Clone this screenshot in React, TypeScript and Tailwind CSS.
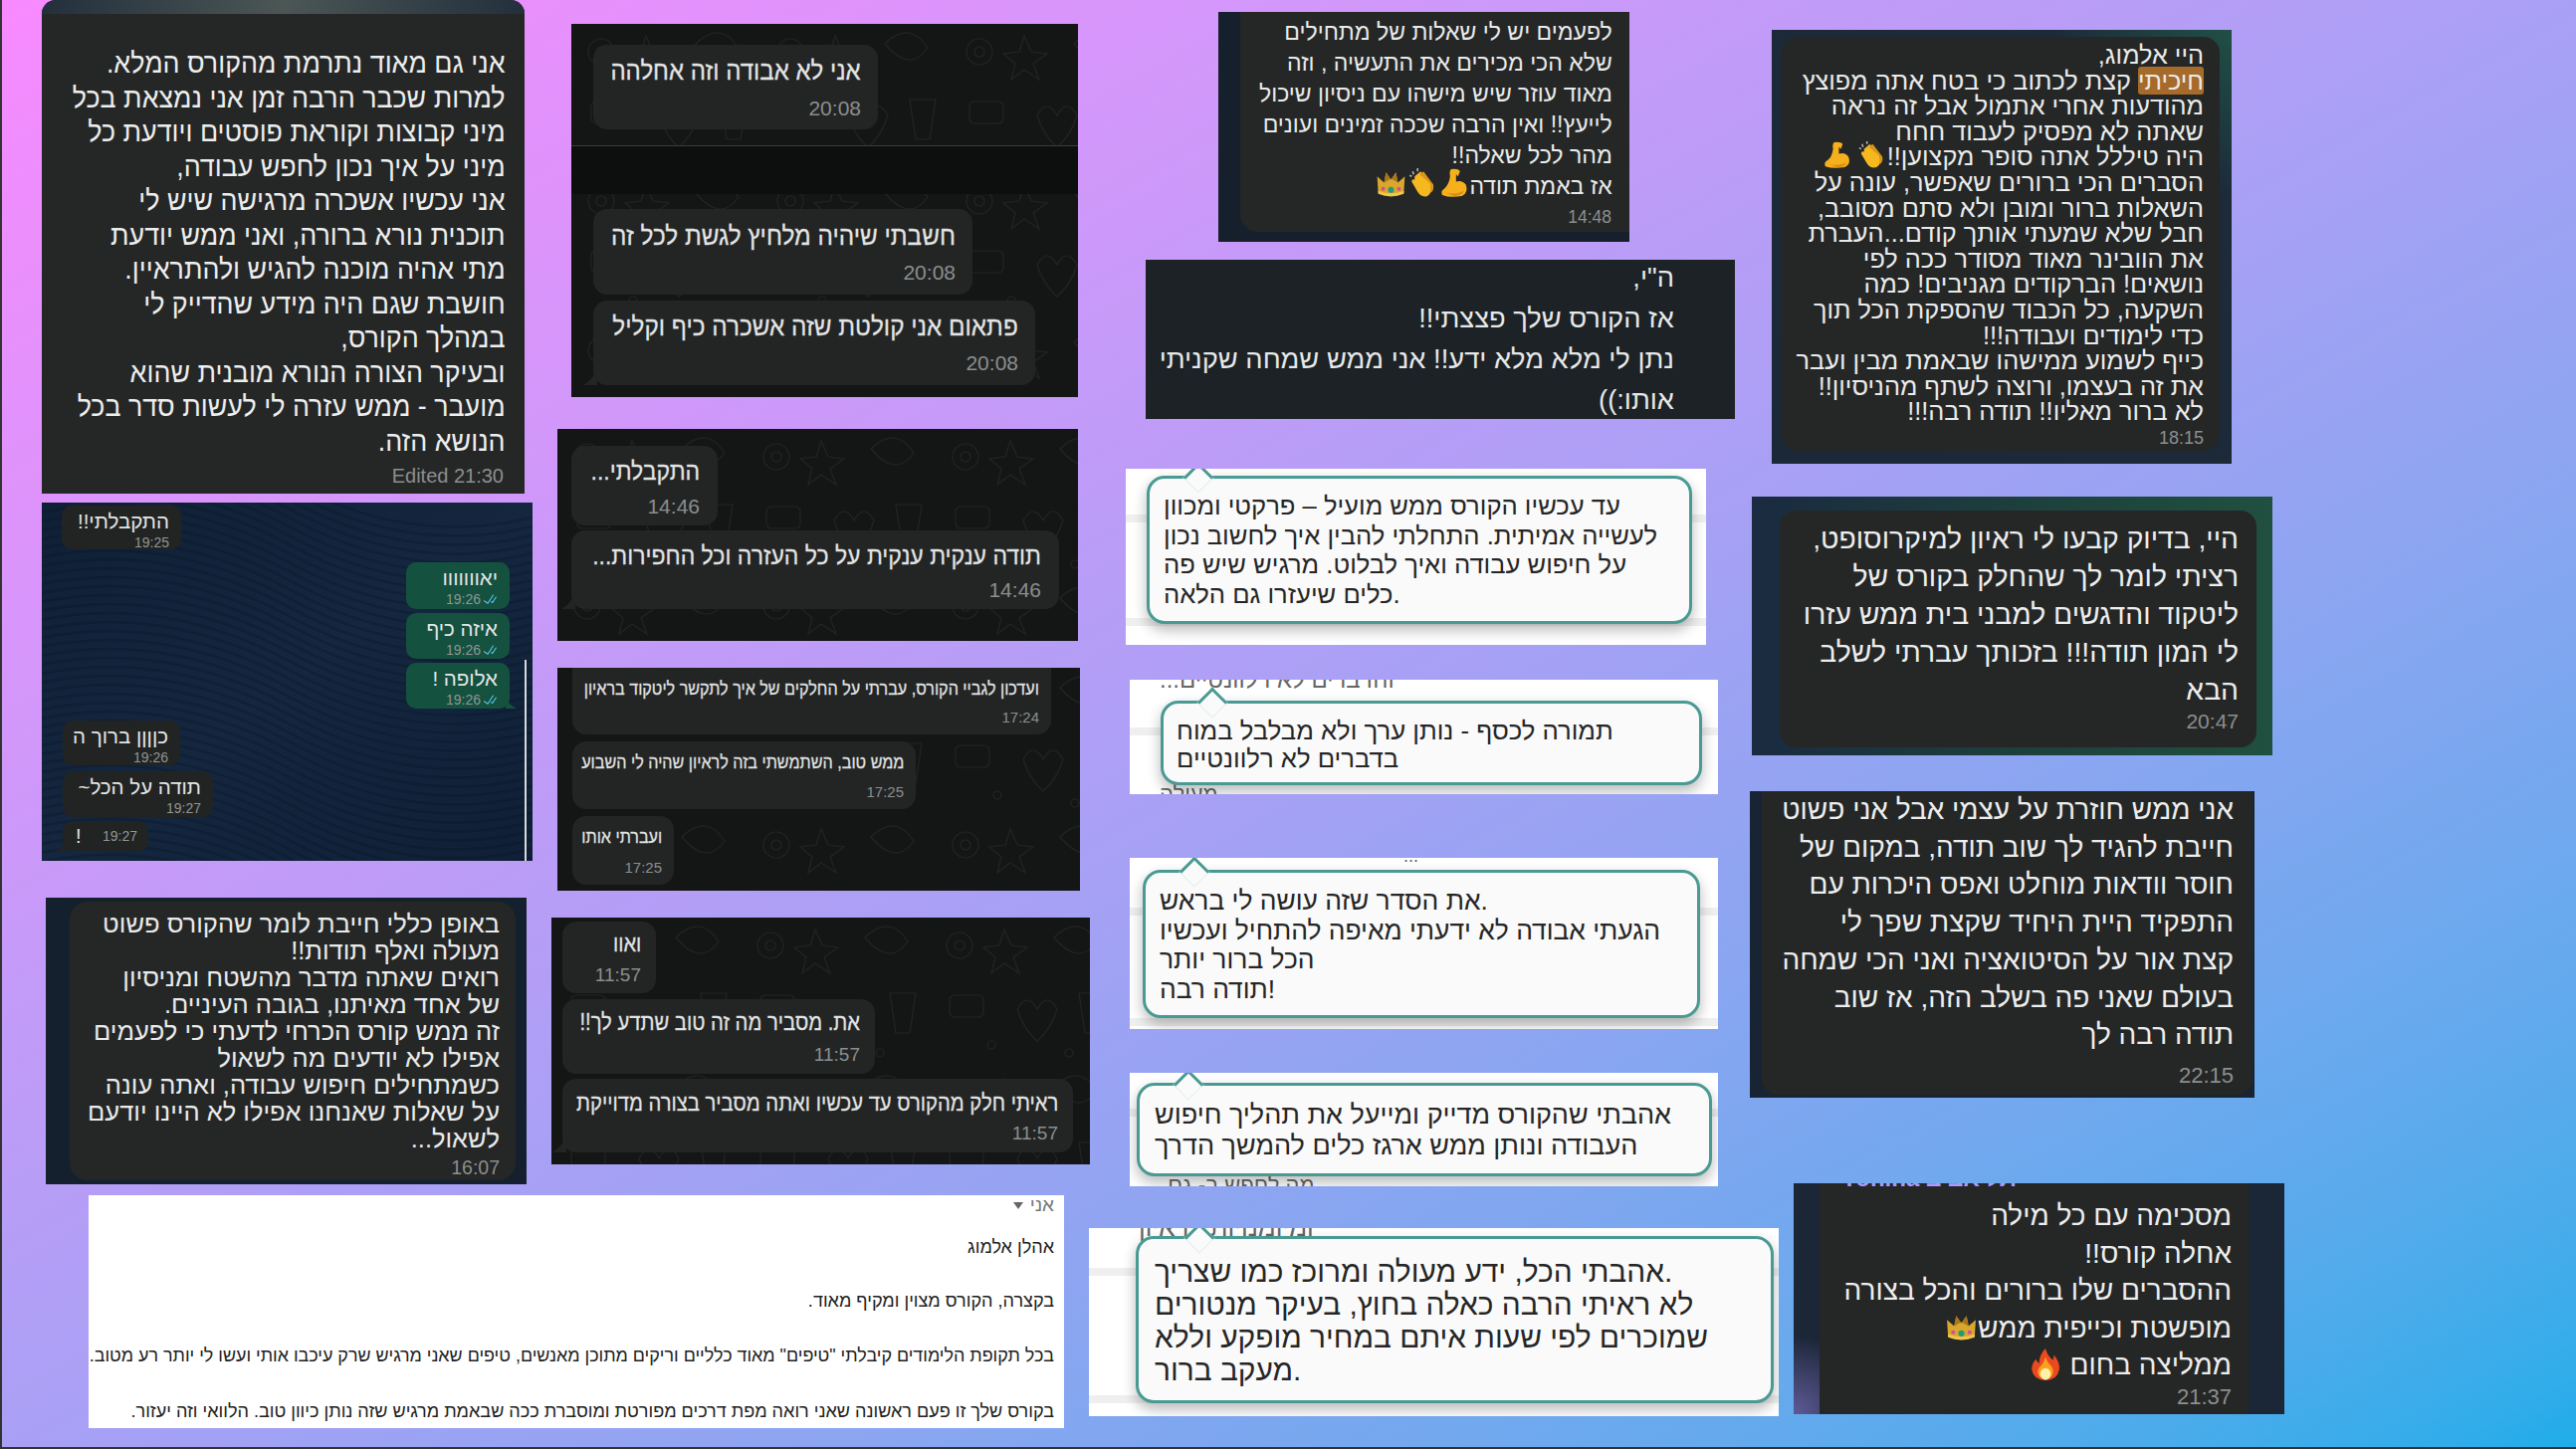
import React from 'react';
import { CheckCheck } from 'lucide-react';

const Crown = ({ s = 26 }: { s?: number }) => (
  <svg width={s} height={s} viewBox="0 0 32 32" className="inline-block align-[3px] -my-[8px]">
    <path d="M3 26 L2 10 L9 16 L11 6 L16 13 L21 6 L23 16 L30 10 L29 26 Q16 31 3 26Z" fill="#d9a72c" />
    <path d="M9 16 L11 6 L16 13 L21 6 L23 16 L16 12Z" fill="#a9761c" />
    <path d="M3 24 Q16 29 29 24 L29 27 Q16 32 3 27Z" fill="#f0c84a" />
    <circle cx="16" cy="23" r="3" fill="#1f9a7c" />
    <circle cx="8" cy="22" r="2" fill="#d64aa0" />
    <circle cx="24" cy="22" r="2" fill="#d64aa0" />
  </svg>
);

const Clap = ({ s = 26 }: { s?: number }) => (
  <svg width={s} height={s} viewBox="0 0 32 32" className="inline-block align-[3px] -my-[8px]">
    <path d="M8 10 L14 5 L24 17 Q27 25 21 29 Q15 31 11 25 L5 15 Q5 12 8 13Z" fill="#f5b81f" />
    <path d="M13 8 L17 5 L27 18 Q28 24 24 26 L24 17Z" fill="#d9961a" />
    <path d="M6 5 L7 8 M11 2 L11 5 M3 9 L5 10" stroke="#bdbdbd" strokeWidth="1.5" />
  </svg>
);

const Muscle = ({ s = 26 }: { s?: number }) => (
  <svg width={s} height={s} viewBox="0 0 32 32" className="inline-block align-[3px] -my-[8px]">
    <path d="M13 3 Q20 2 22 5 L20 10 L18 8 L18 15 Q24 13 28 18 Q31 26 24 29 Q12 31 4 28 Q2 24 6 22 Q11 18 12 10 Q11 5 13 3Z" fill="#f5b01c" />
    <path d="M8 26 Q18 28 26 24 Q24 29 16 29Z" fill="#d68d12" />
  </svg>
);

const Fire = ({ s = 32 }: { s?: number }) => (
  <svg width={s} height={s} viewBox="0 0 32 32" className="inline-block align-[1px] -my-[8px]">
    <path d="M16 1 Q18 8 23 12 Q24 9 24 7 Q30 14 29 21 Q27 31 16 31 Q5 31 3 21 Q3 15 7 11 Q8 14 10 15 Q10 7 16 1Z" fill="#ea4a1f" />
    <path d="M16 9 Q18 15 22 18 Q25 24 21 28 Q16 31 11 28 Q7 24 10 19 Q14 16 16 9Z" fill="#f9a01e" />
    <ellipse cx="16" cy="25" rx="5" ry="5.5" fill="#fff1a8" />
  </svg>
);

const Doodles = () => (
  <svg className="absolute inset-0 w-full h-full">
    <defs>
      <pattern id="doodle" width="190" height="150" patternUnits="userSpaceOnUse">
        <g fill="none" stroke="#212323" strokeWidth="1.2">
          <circle cx="30" cy="28" r="13" />
          <circle cx="30" cy="28" r="5" />
          <path d="M75 12 L82 28 L98 30 L84 40 L90 56 L75 46 L62 56 L66 40 L54 30 L70 28Z" />
          <path d="M125 20 Q150 -4 168 24 Q150 50 125 20Z" />
          <rect x="20" y="78" width="34" height="22" rx="5" />
          <path d="M88 92 Q98 74 108 92 Q118 74 128 92 Q122 112 108 124 Q94 112 88 92Z" />
          <path d="M150 76 L176 76 L170 116 L156 116Z" />
          <circle cx="62" cy="128" r="4" />
          <circle cx="140" cy="136" r="4" />
        </g>
      </pattern>
    </defs>
    <rect width="100%" height="100%" fill="url(#doodle)" />
  </svg>
);

const Waves = () => (
  <svg className="absolute inset-0 w-full h-full" preserveAspectRatio="none" viewBox="0 0 493 360">
    {Array.from({ length: 52 }).map((_, i) => (
      <path
        key={i}
        d={`M-10 ${i * 9 - 60} Q 120 ${i * 9 - 90} 250 ${i * 9 - 20} T 510 ${i * 9 + 10}`}
        fill="none"
        stroke="#0a1524"
        strokeWidth="2.5"
        opacity="0.3"
      />
    ))}
  </svg>
);

const Lines = ({ lines, className = '' }: { lines: React.ReactNode[]; className?: string }) => (
  <div dir="rtl" className={`text-right ${className}`}>
    {lines.map((l, i) => (
      <div key={i} className="whitespace-nowrap">{l}</div>
    ))}
  </div>
);

interface BubbleProps {
  text: string;
  time: string;
  className: string;
  textClass: string;
  timeClass: string;
  tail?: boolean;
}

const Bubble = ({ text, time, className, textClass, timeClass, tail }: BubbleProps) => (
  <div className={`relative bg-[#232525] rounded-[14px] flex flex-col items-end ${className}`}>
    <div dir="rtl" className={`whitespace-nowrap text-[#e4e5e5] origin-right [-webkit-text-stroke:0.3px_#d8d9d9] ${textClass}`}>{text}</div>
    <div className={`text-[#8b8e8e] ${timeClass}`}>{time}</div>
    {tail && (
      <svg width="14" height="16" viewBox="0 0 14 16" className="absolute -left-[10px] bottom-0">
        <path d="M14 0 L14 16 L0 16 Q9 11 14 0Z" fill="#232525" />
      </svg>
    )}
  </div>
);

const PhotoBubble = ({ text, time, className, green, tail }: { text: string; time: string; className: string; green?: boolean; tail?: 'l' | 'r' }) => (
  <div className={`relative rounded-[10px] flex flex-col items-end px-[12px] pt-[4px] ${green ? 'bg-[#14513f]' : 'bg-[#222423]'} ${className}`}>
    <div dir="rtl" className="whitespace-nowrap text-[20.5px] leading-[24px] text-[#e3e5e5]">{text}</div>
    <div className="flex items-center gap-[2px] text-[14px] leading-[18px] text-[#8f9695]">
      {time}
      {green && <CheckCheck size={15} strokeWidth={1.75} className="text-[#5cc6ea] -rotate-12" />}
    </div>
    {tail === 'r' && (
      <svg width="12" height="12" viewBox="0 0 12 12" className="absolute -right-[8px] bottom-0">
        <path d="M0 0 Q4 10 12 12 L0 12Z" fill="#14513f" />
      </svg>
    )}
    {tail === 'l' && (
      <svg width="12" height="12" viewBox="0 0 12 12" className="absolute -left-[8px] bottom-0">
        <path d="M12 0 Q8 10 0 12 L12 12Z" fill="#222423" />
      </svg>
    )}
  </div>
);

const Notch = ({ className }: { className: string }) => (
  <div className={`absolute w-[22px] h-[22px] rotate-45 bg-[#fafafa] border-t-[3px] border-l-[3px] border-t-[#4a9a94] border-l-[#4a9a94] border-r border-b border-r-[#e2eeeb] border-b-[#e2eeeb] ${className}`} />
);

const Band = ({ className }: { className: string }) => (
  <div className={`absolute left-0 right-0 h-[8px] bg-[#efefef] ${className}`} />
);

const Tip = ({ className, children }: { className: string; children: React.ReactNode }) => (
  <div className={`relative bg-[#fafafa] border-[3px] border-[#4a9a94] rounded-[18px] shadow-[0_6px_14px_rgba(0,0,0,0.28)] text-[#262626] ${className}`}>
    {children}
  </div>
);

const TipLines = ({ lines, className }: { lines: string[]; className: string }) => (
  <div className={`text-left ${className}`}>
    {lines.map((l, i) => (
      <div key={i} className="whitespace-nowrap">{l}</div>
    ))}
  </div>
);

export default function App() {
  return (
    <div className="relative w-[2588px] h-[1456px] overflow-hidden bg-linear-to-br from-[#f88aff] via-[#a9a0f5] to-[#1dade9] font-['Liberation_Sans',Arial,sans-serif] shadow-[inset_2px_0_0_#333,inset_0_-2px_0_#333]">
      {/* card A */}
      <div className="absolute left-[42px] top-0 w-[485px] h-[496px] bg-[#252727] rounded-t-[14px] overflow-hidden">
        <div className="h-[14px] bg-linear-to-r from-[#23303c] via-[#4c5655] to-[#23303c]" />
        <Lines
          className="pt-[32px] pr-[21px] text-[29px] leading-[34.5px] text-[#eceded] origin-right scale-x-[0.925]"
          lines={[
            'אני גם מאוד נתרמת מהקורס המלא.',
            'למרות שכבר הרבה זמן אני נמצאת בכל',
            'מיני קבוצות וקוראת פוסטים ויודעת כל',
            'מיני על איך נכון לחפש עבודה,',
            'אני עכשיו אשכרה מרגישה שיש לי',
            'תוכנית נורא ברורה, ואני ממש יודעת',
            'מתי אהיה מוכנה להגיש ולהתראיין.',
            'חושבת שגם היה מידע שהדייק לי',
            'במהלך הקורס,',
            'ובעיקר הצורה הנורא מובנית שהוא',
            'מועבר - ממש עזרה לי לעשות סדר בכל',
            'הנושא הזה.',
          ]}
        />
        <div className="pr-[21px] mt-[7px] text-right text-[20px] leading-[22px] text-[#8b8e8e]">Edited 21:30</div>
      </div>

      {/* card B */}
      <div className="absolute left-[574px] top-[24px] w-[509px] h-[375px] bg-[#141515] overflow-hidden">
        <Doodles />
        <div className="absolute left-0 right-0 top-[122px] h-[49px] bg-[#0d0e0e] border-t border-[#3c3e3e]" />
        <div className="relative pl-[22px] flex flex-col items-start">
          <Bubble className="w-[286px] h-[85px] mt-[21px] px-[17px] pt-[12px]" text="אני לא אבודה וזה אחלהה" time="20:08" textClass="text-[26px] leading-[28px] scale-x-[0.925]" timeClass="text-[21px] leading-[20px] mt-[14px]" />
          <Bubble className="w-[381px] h-[86px] mt-[80px] px-[17px] pt-[13px]" text="חשבתי שיהיה מלחיץ לגשת לכל זה" time="20:08" textClass="text-[26px] leading-[28px] scale-x-[0.935]" timeClass="text-[21px] leading-[20px] mt-[13px]" />
          <Bubble tail className="w-[444px] h-[85px] mt-[6px] px-[17px] pt-[12px]" text="פתאום אני קולטת שזה אשכרה כיף וקליל" time="20:08" textClass="text-[26px] leading-[28px] scale-x-[0.935]" timeClass="text-[21px] leading-[20px] mt-[13px]" />
        </div>
      </div>

      {/* card C */}
      <div className="absolute left-[560px] top-[431px] w-[523px] h-[213px] bg-[#141515] overflow-hidden">
        <Doodles />
        <div className="relative pl-[14px] flex flex-col items-start">
          <Bubble className="w-[147px] h-[80px] mt-[17px] px-[18px] pt-[12px]" text="התקבלתי..." time="14:46" textClass="text-[25px] leading-[26px] scale-x-[0.92]" timeClass="text-[21px] leading-[20px] mt-[13px]" />
          <Bubble tail className="w-[490px] h-[79px] mt-[5px] px-[18px] pt-[12px]" text="תודה ענקית ענקית על כל העזרה וכל החפירות..." time="14:46" textClass="text-[25px] leading-[26px] scale-x-[0.92]" timeClass="text-[21px] leading-[20px] mt-[12px]" />
        </div>
      </div>

      {/* card D */}
      <div className="absolute left-[560px] top-[671px] w-[525px] h-[224px] bg-[#141515] overflow-hidden">
        <Doodles />
        <div className="relative pl-[15px] flex flex-col items-start">
          <Bubble className="w-[481px] h-[67px] px-[12px] pt-[7px] !rounded-t-none" text="ועדכון לגביי הקורס, עברתי על החלקים של איך לתקשר ליטקוד בראיון" time="17:24" textClass="text-[19px] leading-[28px] scale-x-[0.85]" timeClass="text-[15px] leading-[18px] mt-[6px]" />
          <Bubble className="w-[345px] h-[68px] mt-[7px] px-[12px] pt-[7px]" text="ממש טוב, השתמשתי בזה לראיון שהיה לי השבוע" time="17:25" textClass="text-[19px] leading-[28px] scale-x-[0.85]" timeClass="text-[15px] leading-[18px] mt-[7px]" />
          <Bubble className="w-[102px] h-[69px] mt-[7px] px-[12px] pt-[7px]" text="ועברתי אותו" time="17:25" textClass="text-[19px] leading-[28px] scale-x-[0.85]" timeClass="text-[15px] leading-[18px] mt-[8px]" />
        </div>
      </div>

      {/* photo card */}
      <div className="absolute left-[42px] top-[505px] w-[493px] h-[360px] bg-linear-to-br from-[#0f2036] via-[#14273f] to-[#0f1f36] overflow-hidden">
        <Waves />
        <div className="absolute right-[6px] top-[158px] bottom-0 w-[2px] bg-[#d5dade]" />
        <div className="relative flex flex-col">
          <PhotoBubble className="ml-[20px] mt-[3px] w-[120px] h-[44px]" text="התקבלתי!!" time="19:25" />
          <div className="flex flex-col items-end pr-[23px] mt-[13px] gap-[4px]">
            <PhotoBubble green className="w-[104px] h-[47px]" text="יאווווווו" time="19:26" />
            <PhotoBubble green className="w-[104px] h-[46px]" text="איזה כיף" time="19:26" />
            <PhotoBubble green tail="r" className="w-[104px] h-[46px]" text="אלופה !" time="19:26" />
          </div>
          <PhotoBubble className="ml-[21px] mt-[12px] w-[118px] h-[45px]" text="כןןןן ברוך ה" time="19:26" />
          <PhotoBubble className="ml-[21px] mt-[6px] w-[151px] h-[46px]" text="תודה על הכל~" time="19:27" />
          <div className="relative ml-[21px] mt-[4px] w-[86px] h-[30px] bg-[#222423] rounded-[10px] flex items-center justify-between pl-[13px] pr-[11px] text-[#8f9695] text-[14px]">
            <span className="text-[#e3e5e5] text-[20px]">!</span>
            <span>19:27</span>
            <svg width="12" height="12" viewBox="0 0 12 12" className="absolute -left-[8px] bottom-0">
              <path d="M12 0 Q8 10 0 12 L12 12Z" fill="#222423" />
            </svg>
          </div>
        </div>
      </div>

      {/* card E */}
      <div className="absolute left-[46px] top-[902px] w-[483px] h-[288px] bg-[#14202e] overflow-hidden pl-[24px] pr-[11px] pt-[4px]">
        <div className="h-[280px] bg-[#252727] rounded-[18px]">
          <Lines
            className="pt-[9px] pr-[16px] text-[25.5px] leading-[27px] text-[#e9eaea]"
            lines={[
              'באופן כללי חייבת לומר שהקורס פשוט',
              'מעולה ואלף תודות!!',
              'רואים שאתה מדבר מהשטח ומניסיון',
              'של אחד מאיתנו, בגובה העיניים.',
              'זה ממש קורס הכרחי לדעתי כי לפעמים',
              'אפילו לא יודעים מה לשאול',
              'כשמתחילים חיפוש עבודה, ואתה עונה',
              'על שאלות שאנחנו אפילו לא היינו יודעם',
              'לשאול...',
            ]}
          />
          <div className="pr-[16px] mt-[4px] text-right text-[19.5px] leading-[22px] text-[#8b8e8e]">16:07</div>
        </div>
      </div>

      {/* card F */}
      <div className="absolute left-[554px] top-[922px] w-[541px] h-[248px] bg-[#141515] overflow-hidden">
        <Doodles />
        <div className="relative pl-[11px] flex flex-col items-start">
          <Bubble className="w-[94px] h-[72px] mt-[4px] px-[15px] pt-[8px]" text="ואוו" time="11:57" textClass="text-[23px] leading-[28px] scale-x-[0.88]" timeClass="text-[19px] leading-[20px] mt-[8px]" />
          <Bubble className="w-[314px] h-[75px] mt-[6px] px-[15px] pt-[9px]" text="את. מסביר מה זה טוב שתדע לך!!" time="11:57" textClass="text-[23px] leading-[28px] scale-x-[0.88]" timeClass="text-[19px] leading-[20px] mt-[9px]" />
          <Bubble tail className="w-[513px] h-[74px] mt-[5px] px-[15px] pt-[10px]" text="ראיתי חלק מהקורס עד עכשיו ואתה מסביר בצורה מדוייקת" time="11:57" textClass="text-[23px] leading-[28px] scale-x-[0.88]" timeClass="text-[19px] leading-[20px] mt-[7px]" />
        </div>
      </div>

      {/* email */}
      <div dir="rtl" className="absolute left-[89px] top-[1201px] w-[980px] h-[234px] bg-white pr-[10px] text-[#222] text-[19px] overflow-hidden">
        <div className="flex items-center gap-[7px] h-[20px] text-[#777] text-[19px]">
          <span>אני</span>
          <svg width="10" height="7" viewBox="0 0 10 7"><path d="M0 0 H10 L5 7Z" fill="#666" /></svg>
        </div>
        <div className="mt-[21px] leading-[22px] origin-right scale-x-[0.95]">אהלן אלמוג</div>
        <div className="mt-[32px] leading-[22px] origin-right scale-x-[0.95]">בקצרה, הקורס מצוין ומקיף מאוד.</div>
        <div className="mt-[33px] leading-[22px] whitespace-nowrap origin-right scale-x-[0.942]">בכל תקופת הלימודים קיבלתי "טיפים" מאוד כלליים וריקים מתוכן מאנשים, טיפים שאני מרגיש שרק עיכבו אותי ועשו לי יותר רע מטוב.</div>
        <div className="mt-[34px] leading-[22px] whitespace-nowrap origin-right scale-x-[0.95]">בקורס שלך זו פעם ראשונה שאני רואה מפת דרכים מפורטת ומוסברת ככה שבאמת מרגיש שזה נותן כיוון טוב. הלוואי וזה יעזור.</div>
      </div>

      {/* card G */}
      <div className="absolute left-[1224px] top-[12px] w-[413px] h-[231px] bg-[#15202c] overflow-hidden pl-[22px] pb-[10px]">
        <div className="h-[221px] bg-[#252727] rounded-bl-[18px] rounded-br-none">
          <Lines
            className="pt-[4px] pr-[18px] text-[24px] leading-[31px] text-[#e9eaea] origin-right scale-x-[0.96]"
            lines={[
              'לפעמים יש לי שאלות של מתחילים',
              'שלא הכי מכירים את התעשיה , וזה',
              'מאוד עוזר שיש מישהו עם ניסיון שיכול',
              'לייעץ!! ואין הרבה שככה זמינים ועונים',
              'מהר לכל שאלה!!',
              <>אז באמת תודה<Muscle s={33} /><Clap s={33} /><Crown s={33} /></>,
            ]}
          />
          <div className="pr-[18px] mt-[5px] text-right text-[17.5px] leading-[22px] text-[#8b8e8e]">14:48</div>
        </div>
      </div>

      {/* card H */}
      <div className="absolute left-[1151px] top-[261px] w-[592px] h-[160px] bg-[#1c2226] overflow-hidden">
        <Lines
          className="-mt-[3px] pr-[61px] text-[27.3px] leading-[41px] text-[#e6e8e8]"
          lines={[
            'ה"י,',
            'אז הקורס שלך פצצתי!!',
            'נתן לי מלא מלא ידע!! אני ממש שמחה שקניתי',
            'אותו:))',
          ]}
        />
      </div>

      {/* card I */}
      <div className="absolute left-[1780px] top-[30px] w-[462px] h-[436px] bg-linear-to-tr from-[#1b2838] via-[#1c2a3a] via-80% to-[#1f5044] overflow-hidden pl-[10px] pr-[12px] pt-[7px]">
        <div className="h-[416px] bg-[#252727] rounded-[16px]">
          <Lines
            className="pt-[6px] pr-[16px] text-[25.3px] leading-[25.6px] text-[#e9eaea]"
            lines={[
              'היי אלמוג,',
              <><span className="bg-[#a66a2a] rounded-[3px]">חיכיתי</span> קצת לכתוב כי בטח אתה מפוצץ</>,
              'מהודעות אחרי אתמול אבל זה נראה',
              'שאתה לא מפסיק לעבוד חחח',
              <>היה טיללל אתה סופר מקצוען!!<Clap s={31} /><span className="inline-block w-[4px]" /><Muscle s={31} /></>,
              'הסברים הכי ברורים שאפשר, עונה על',
              'השאלות ברור ומובן ולא סתם מסובב,',
              'חבל שלא שמעתי אותך קודם...העברת',
              'את הוובינר מאוד מסודר ככה לפי',
              'נושאים! הברקודים מגניבים! כמה',
              'השקעה, כל הכבוד שהספקת הכל תוך',
              'כדי לימודים ועבודה!!!',
              'כייף לשמוע ממישהו שבאמת מבין ועבר',
              'את זה בעצמו, ורוצה לשתף מהניסיון!!',
              'לא ברור מאליו!! תודה רבה!!!',
            ]}
          />
          <div className="pr-[16px] mt-[2px] text-right text-[18px] leading-[22px] text-[#8b8e8e]">18:15</div>
        </div>
      </div>

      {/* tooltips */}
      <div className="absolute left-[1131px] top-[471px] w-[583px] h-[177px] bg-white overflow-hidden">
        <Band className="top-[46px]" />
        <Band className="top-[150px]" />
        <Tip className="ml-[21px] mt-[7px] w-[548px] h-[149px]">
          <Notch className="-top-[12px] left-[38px]" />
          <TipLines
            className="pl-[14px] pt-[13px] text-[25.6px] leading-[29.7px]"
            lines={['עד עכשיו הקורס ממש מועיל – פרקטי ומכוון', 'לעשייה אמיתית. התחלתי להבין איך לחשוב נכון', 'על חיפוש עבודה ואיך לבלוט. מרגיש שיש פה', 'כלים שיעזרו גם הלאה.']}
          />
        </Tip>
      </div>

      <div className="absolute left-[1135px] top-[683px] w-[591px] h-[115px] bg-white overflow-hidden">
        <div className="absolute left-[30px] -top-[14px] text-[24px] leading-[28px] text-[#666]">...והדברים לא רלוונטיים</div>
        <div className="absolute left-[30px] top-[102px] text-[22px] leading-[26px] text-[#666]">מעולה</div>
        <Band className="top-[48px]" />
        <Tip className="ml-[31px] mt-[21px] w-[544px] h-[85px]">
          <Notch className="-top-[12px] left-[38px]" />
          <TipLines
            className="pl-[13px] pt-[13px] text-[25.7px] leading-[28px]"
            lines={['תמורה לכסף - נותן ערך ולא מבלבל במוח', 'בדברים לא רלוונטיים']}
          />
        </Tip>
      </div>

      <div className="absolute left-[1135px] top-[862px] w-[591px] h-[172px] bg-white overflow-hidden">
        <div className="absolute left-[275px] -top-[12px] text-[18px] leading-[20px] text-[#666]">...</div>
        <Band className="top-[50px]" />
        <Band className="top-[161px]" />
        <Tip className="ml-[13px] mt-[12px] w-[560px] h-[149px]">
          <Notch className="-top-[12px] left-[38px]" />
          <TipLines
            className="pl-[14px] pt-[14px] text-[26.4px] leading-[29.5px]"
            lines={['את הסדר שזה עושה לי בראש.', 'הגעתי אבודה לא ידעתי מאיפה להתחיל ועכשיו', 'הכל ברור יותר', 'תודה רבה!']}
          />
        </Tip>
      </div>

      <div className="absolute left-[1135px] top-[1078px] w-[591px] h-[114px] bg-white overflow-hidden">
        <div className="absolute left-[20px] top-[100px] text-[22px] leading-[26px] text-[#666]">...מה לחפש ב- גם</div>
        <Band className="top-[36px]" />
        <Tip className="ml-[7px] mt-[10px] w-[578px] h-[94px]">
          <Notch className="-top-[12px] left-[38px]" />
          <TipLines
            className="pl-[15px] pt-[14px] text-[27px] leading-[31px]"
            lines={['אהבתי שהקורס מדייק ומייעל את תהליך חיפוש', 'העבודה ונותן ממש ארגז כלים להמשך הדרך']}
          />
        </Tip>
      </div>

      <div className="absolute left-[1094px] top-[1234px] w-[693px] h-[189px] bg-white overflow-hidden">
        <div className="absolute left-[50px] -top-[16px] text-[26px] leading-[30px] text-[#666]">ומיומנויות לראיון</div>
        <Band className="top-[40px]" />
        <Band className="top-[168px]" />
        <Tip className="ml-[47px] mt-[8px] w-[641px] h-[168px]">
          <Notch className="-top-[12px] left-[50px]" />
          <TipLines
            className="pl-[16px] pt-[16px] text-[29.9px] leading-[33px]"
            lines={['אהבתי הכל, ידע מעולה ומרוכז כמו שצריך.', 'לא ראיתי הרבה כאלה בחוץ, בעיקר מנטורים', 'שמוכרים לפי שעות איתם במחיר מופקע וללא', 'מעקב ברור.']}
          />
        </Tip>
      </div>

      {/* card J */}
      <div className="absolute left-[1760px] top-[499px] w-[523px] h-[260px] bg-linear-to-r from-[#1a2a40] via-[#1d3f3c] to-[#20503f] overflow-hidden pl-[28px] pr-[16px] pt-[14px]">
        <div className="h-[238px] bg-[#252727] rounded-[16px]">
          <Lines
            className="pt-[9px] pr-[18px] text-[28.3px] leading-[38px] text-[#eceded]"
            lines={[
              'היי, בדיוק קבעו לי ראיון למיקרוסופט,',
              'רציתי לומר לך שהחלק בקורס של',
              'ליטקוד והדגשים למבני בית ממש עזרו',
              'לי המון תודה!!! בזכותך עברתי לשלב',
              'הבא',
            ]}
          />
          <div className="pr-[18px] mt-[1px] text-right text-[21px] leading-[24px] text-[#8b8e8e]">20:47</div>
        </div>
      </div>

      {/* card K */}
      <div className="absolute left-[1758px] top-[795px] w-[507px] h-[308px] bg-[#182434] overflow-hidden pl-[12px] pr-[2px] pb-[3px]">
        <div className="h-[305px] bg-[#252727] rounded-b-[16px]">
          <Lines
            className="pr-[19px] text-[28px] leading-[37.7px] text-[#eceded]"
            lines={[
              'אני ממש חוזרת על עצמי אבל אני פשוט',
              'חייבת להגיד לך שוב תודה, במקום של',
              'חוסר וודאות מוחלט ואפס היכרות עם',
              'התפקיד היית היחיד שקצת שפך לי',
              'קצת אור על הסיטואציה ואני הכי שמחה',
              'בעולם שאני פה בשלב הזה, אז שוב',
              'תודה רבה לך',
            ]}
          />
          <div className="pr-[19px] mt-[10px] text-right text-[22px] leading-[24px] text-[#8b8e8e]">22:15</div>
        </div>
      </div>

      {/* card L */}
      <div className="absolute left-[1802px] top-[1189px] w-[493px] h-[232px] bg-[#1b2636] bg-[radial-gradient(circle_at_0%_100%,#5f5a98,transparent_80px)] overflow-hidden px-[26px]">
        <div className="relative h-full w-[431px] bg-[#252727]">
          <div className="absolute left-[22px] -top-[17px] font-bold text-[24px] leading-[24px] text-[#a79bff] whitespace-nowrap">Yonina תל אביב</div>
          <Lines
            className="pt-[14px] pr-[17px] text-[28px] leading-[37.5px] text-[#eceded]"
            lines={[
              'מסכימה עם כל מילה',
              'אחלה קורס!!',
              'ההסברים שלו ברורים והכל בצורה',
              <>מופשטת וכייפית ממש<Crown s={33} /></>,
              <>ממליצה בחום <Fire s={34} /></>,
            ]}
          />
          <div className="pr-[17px] mt-[1px] text-right text-[22px] leading-[24px] text-[#8b8e8e]">21:37</div>
        </div>
      </div>
    </div>
  );
}
